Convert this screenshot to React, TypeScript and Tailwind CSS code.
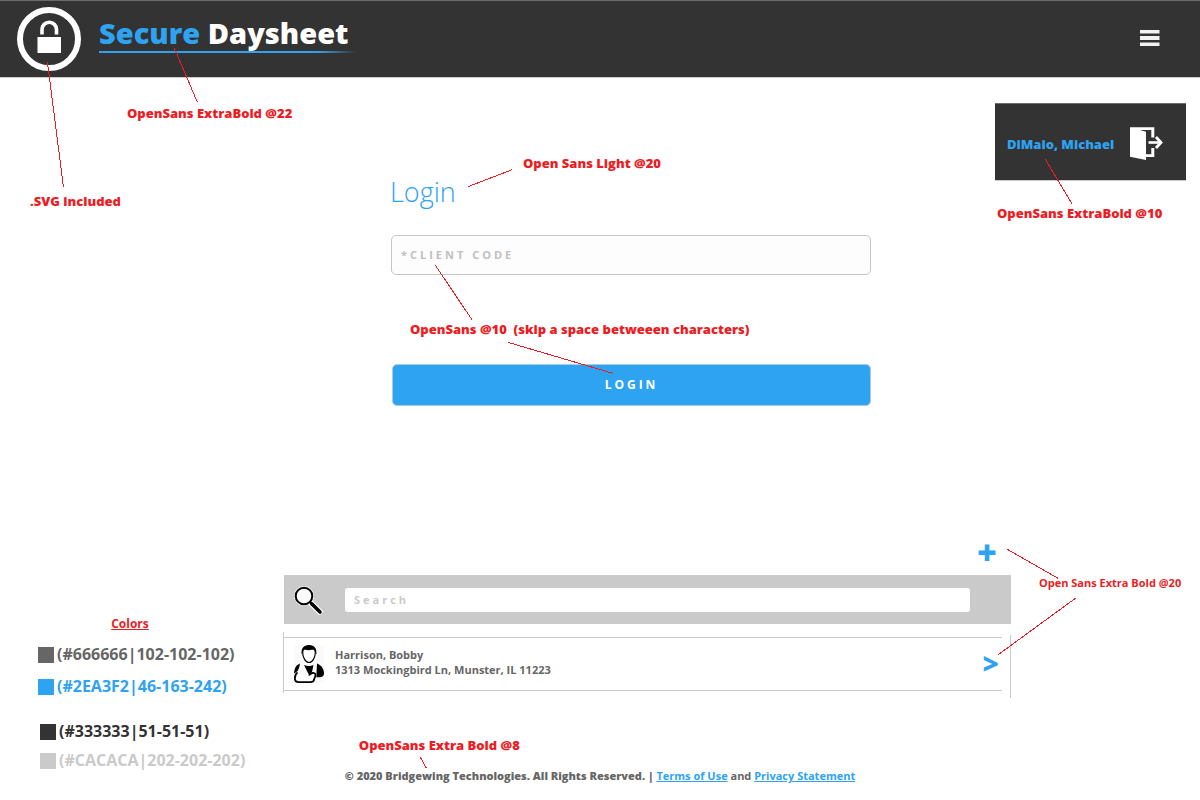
import type { ReactNode } from "react";

type LeaderProps = { className: string; w: number; h: number; rising?: boolean };

function Leader({ className, w, h, rising = false }: LeaderProps) {
  return (
    <svg
      className={`pointer-events-none absolute z-10 max-w-none ${className}`}
      width={w + 1}
      height={h + 1}
      viewBox={`0 0 ${w + 1} ${h + 1}`}
      aria-hidden="true"
    >
      <line
        x1={0.5}
        y1={rising ? h + 0.5 : 0.5}
        x2={w + 0.5}
        y2={rising ? 0.5 : h + 0.5}
        stroke="#ed1c24"
        shapeRendering="crispEdges"
      />
    </svg>
  );
}

function Note({ className, children }: { className: string; children: ReactNode }) {
  return (
    <span
      className={`absolute z-10 text-[13px] leading-5 font-extrabold whitespace-pre text-[#ed1c24] ${className}`}
    >
      {children}
    </span>
  );
}

function LockLogo() {
  return (
    <svg width="64" height="64" viewBox="0 0 64 64" aria-hidden="true">
      <circle cx="32" cy="32" r="29" fill="none" stroke="#fff" strokeWidth="6" />
      <rect x="20.5" y="30" width="23.5" height="16" fill="#fff" />
      <path d="M25 27.5v-5a7.25 7.25 0 0 1 14.5 0v5" fill="none" stroke="#fff" strokeWidth="3.6" />
    </svg>
  );
}

function DoorIcon() {
  return (
    <svg width="34" height="34" viewBox="0 0 34 34" aria-hidden="true">
      <path d="M0 .3H24.3V10.500H21.300V3H10l6 1.700V33L0 29.800Z" fill="#fff" />
      <path d="M16 27.300h5.300V21h3v9H16Z" fill="#fff" />
      <path d="M18.500 15.500H30" stroke="#fff" strokeWidth="2.600" />
      <path d="M26 10l5 5.500-5 5.500" fill="none" stroke="#fff" strokeWidth="2.800" />
    </svg>
  );
}

function SearchIcon() {
  return (
    <svg width="30" height="30" viewBox="0 0 30 30" aria-hidden="true">
      <circle cx="10" cy="11" r="10" fill="#fff" />
      <path d="M16 17l11.500 11.500" stroke="#fff" strokeWidth="6" />
      <circle cx="10" cy="11" r="8.300" fill="#fafafa" stroke="#000" strokeWidth="2" />
      <path d="M16 17l3 3" stroke="#000" strokeWidth="2.500" />
      <path d="M18 19l8 8" stroke="#000" strokeWidth="3.600" strokeLinecap="round" />
    </svg>
  );
}

function PatientIcon() {
  return (
    <svg width="30" height="38" viewBox="0 0 30 38" aria-hidden="true">
      <rect width="30" height="38" fill="#fafafa" />
      <path
        d="M8.700 7.500C8.700 3 11 1 15 1s6.300 2.500 6.300 6.500c0 5-2.800 10-6.300 10s-6.300-5-6.300-10Z"
        fill="#fff"
        stroke="#000"
        strokeWidth="1.200"
      />
      <path
        d="M7.600 9.500C7 3.500 9.500 0 15 0s8 3.500 7.400 9.500L21 6c-1-1.200-2-1.500-3.500-1.200-2 .5-4 .5-6 0C10 4.500 9.500 5 9 6Z"
        fill="#000"
      />
      <path d="M6 18.500C2 20 .5 23 0 28.500l2.500-1.500C4.500 25.500 5.500 22 6 18.500Z" fill="#000" />
      <path d="M23 18.500c4.500 1.500 7 6 7 10 0 2.500-2 3.800-4 3.800h-3.500V28Z" fill="#000" />
      <path d="M10 20c3 1.300 7 1.300 9.500 0l-1.500 7-1 1.500-2.500.5Z" fill="#000" />
      <path
        d="M3.500 27.500C1.200 29 .9 31 .9 33.500c0 2.600 1.300 3.600 4 3.600h11.500c2.300 0 3.600-1 3.900-3.300.3-1.400 1.300-2.300 1.200-3.800-.1-1.600-1.500-2.200-3-2-2 .3-3 1-3.500 2.500h-8Z"
        fill="#fff"
      />
      <path
        d="M3.500 27.500C1.200 29 .9 31 .9 33.500c0 2.600 1.300 3.600 4 3.600h11.500c2.300 0 3.600-1 3.900-3.300.3-1.400 1.300-2.300 1.200-3.800-.1-1.600-1.500-2.200-3-2-2 .3-3 1-3.500 2.500"
        fill="none"
        stroke="#000"
        strokeWidth="1.800"
      />
    </svg>
  );
}

function Swatch({ box, text, label }: { box: string; text: string; label: string }) {
  return (
    <li className={`flex items-end gap-[3px] text-[16px] leading-[18px] font-bold whitespace-nowrap ${text}`}>
      <span className={`size-4 ${box}`} />
      {label}
    </li>
  );
}

export default function App() {
  return (
    <div className="min-h-screen bg-white font-['Open_Sans',sans-serif] text-[#666666]">
      <header className="flex h-[78px] items-start justify-between border-t border-b border-t-[#6b6b6b] border-b-[#cacaca] bg-[#333333] pt-[6px] pr-10 pl-[17px]">
        <div className="flex items-start gap-[18px]">
          <div className="relative">
            <LockLogo />
            <Leader className="top-[55px] left-[30px]" w={16} h={125} />
            <Note className="top-[184px] left-[13px]">.SVG included</Note>
          </div>
          <div className="relative mt-2">
            <h1 className="text-[29px] leading-9 font-extrabold whitespace-nowrap text-white">
              <span className="text-[#2ea3f2]">Secure</span> Daysheet
            </h1>
            <div className="h-[2px] w-[258px] bg-linear-to-r from-[#2ea3f2] from-85% to-[#333333]" />
            <Leader className="top-[33px] left-[75px]" w={23} h={54} />
            <Note className="top-[88px] left-7">OpenSans ExtraBold @22</Note>
          </div>
        </div>
        <button type="button" aria-label="Menu" className="mt-[23px]">
          <svg width="20" height="16" viewBox="0 0 20 16" aria-hidden="true">
            <path d="M0 0h19.500v3.500H0zM0 6h19.500v4H0zM0 12.500h19.500v3.500H0z" fill="#f2f2f2" />
          </svg>
        </button>
      </header>

      <section className="grid min-h-[462px] grid-cols-[13fr_16fr_11fr]">
        <form className="relative col-start-2 pt-24" onSubmit={(e) => e.preventDefault()}>
          <h2 className="text-[27px] leading-9 font-light text-[#2ea3f2]">Login</h2>
          <div className="-mr-px pt-[25px] pl-px">
            <input
              type="text"
              aria-label="Client code"
              placeholder="*CLIENT CODE"
              className="block h-10 w-full rounded-[5px] border border-[#c4c6c8] bg-[#fdfdfd] px-[9px] pb-[2px] text-[11px] font-bold tracking-[3px] text-[#666666] outline-none placeholder:text-[#c0c0c0]"
            />
            <div className="pt-[89px] pl-px">
              <button
                type="submit"
                className="block h-[42px] w-full rounded-[5px] border border-[#a9cbe2] bg-[#2ea3f2] text-[12px] font-bold tracking-[3px] text-white"
              >
                LOGIN
              </button>
            </div>
          </div>
          <Leader className="top-[91px] left-[78px]" w={44} h={17} rising />
          <Note className="top-[75px] left-[133px]">Open Sans Light @20</Note>
          <Leader className="top-[187px] left-[45px]" w={37} h={55} />
          <Note className="top-[241px] left-5">OpenSans @10  (skip a space betweeen characters)</Note>
          <Leader className="top-[264px] left-[118px]" w={105} h={31} />
        </form>

        <div className="relative mt-[25px] mr-[14px] flex h-[78px] w-[191px] items-center justify-between justify-self-end border-t border-b border-t-[#6b6b6b] border-b-[#cacaca] bg-[#333333] pt-[3px] pr-[22px] pl-3">
          <span className="text-[13px] leading-5 font-extrabold whitespace-nowrap text-[#2ea3f2]">
            DiMaio, Michael
          </span>
          <button type="button" aria-label="Log out">
            <DoorIcon />
          </button>
          <Leader className="top-[55px] left-[50px]" w={27} h={45} />
          <Note className="top-[99px] left-[2px]">OpenSans ExtraBold @10</Note>
        </div>
      </section>

      <section className="grid grid-cols-[283px_1fr_189px]">
        <div className="pt-[76px] pl-[38px]">
          <h3 className="w-[184px] text-center text-[12px] leading-4 font-bold text-[#ed1c24] underline">Colors</h3>
          <ul className="mt-[13px] flex flex-col gap-[14px]">
            <Swatch box="bg-[#666666]" text="text-[#666666]" label="(#666666|102-102-102)" />
            <Swatch box="bg-[#2ea3f2]" text="text-[#2ea3f2]" label="(#2EA3F2|46-163-242)" />
          </ul>
          <ul className="mt-[27px] flex flex-col gap-[11px] pl-[2px]">
            <Swatch box="bg-[#333333]" text="text-[#333333]" label="(#333333|51-51-51)" />
            <Swatch box="bg-[#cacaca]" text="text-[#cacaca]" label="(#CACACA|202-202-202)" />
          </ul>
        </div>

        <div>
          <div className="flex h-[35px] items-start justify-end pr-[14px]">
            <button type="button" aria-label="Add" className="text-[34px] leading-6 font-extrabold text-[#2ea3f2]">
              +
            </button>
          </div>
          <div className="ml-px flex h-[49px] items-center bg-[#cacaca] pr-[41px] pl-[10px]">
            <label htmlFor="search" aria-label="Search">
              <SearchIcon />
            </label>
            <input
              id="search"
              type="text"
              placeholder="Search"
              className="ml-[21px] h-6 min-w-0 flex-1 rounded-[3px] bg-white px-[9px] text-[11px] font-bold tracking-[3px] text-[#666666] outline-none placeholder:text-[#cacaca]"
            />
          </div>
          <div className="mt-2 flex">
            <div className="mb-[5px] flex-1 border-l border-[#cacaca] pt-[5px] pb-[2px]">
              <div className="flex h-[54px] items-center border-y border-[#cacaca] pr-[3px] pl-[10px]">
                <PatientIcon />
                <p className="ml-[11px] flex-1 pb-[5px] text-[11px] leading-[15px] font-bold">
                  Harrison, Bobby
                  <br />
                  1313 Mockingbird Ln, Munster, IL 11223
                </p>
                <button
                  type="button"
                  aria-label="Open Harrison, Bobby"
                  className="pb-[2px] text-[28px] leading-7 font-extrabold text-[#2ea3f2]"
                >
                  &gt;
                </button>
              </div>
            </div>
            <div className="mt-[3px] w-[9px] border-r border-[#cacaca]" />
          </div>
        </div>

        <div className="relative pt-[33px] pl-7">
          <Leader className="top-[9px] left-[-4px]" w={51} h={29} />
          <p className="text-[11px] leading-5 font-bold whitespace-nowrap text-[#ed1c24]">Open Sans Extra Bold @20</p>
          <Leader className="top-[57px] left-[-13px]" w={78} h={57} rising />
        </div>
      </section>

      <footer className="flex justify-center text-[11px] leading-[14px] font-bold">
        <p className="relative whitespace-nowrap">
          <span className="font-extrabold">© 2020 Bridgewing Technologies. All Rights Reserved. |</span>{" "}
          <a href="#terms" className="text-[#2ea3f2] underline">
            Terms of Use
          </a>{" "}
          and{" "}
          <a href="#privacy" className="text-[#2ea3f2] underline">
            Privacy Statement
          </a>
          <Leader className="top-[-12px] left-[75px]" w={6} h={11} />
          <Note className="top-[-34px] left-[14px]">OpenSans Extra Bold @8</Note>
        </p>
      </footer>
    </div>
  );
}
